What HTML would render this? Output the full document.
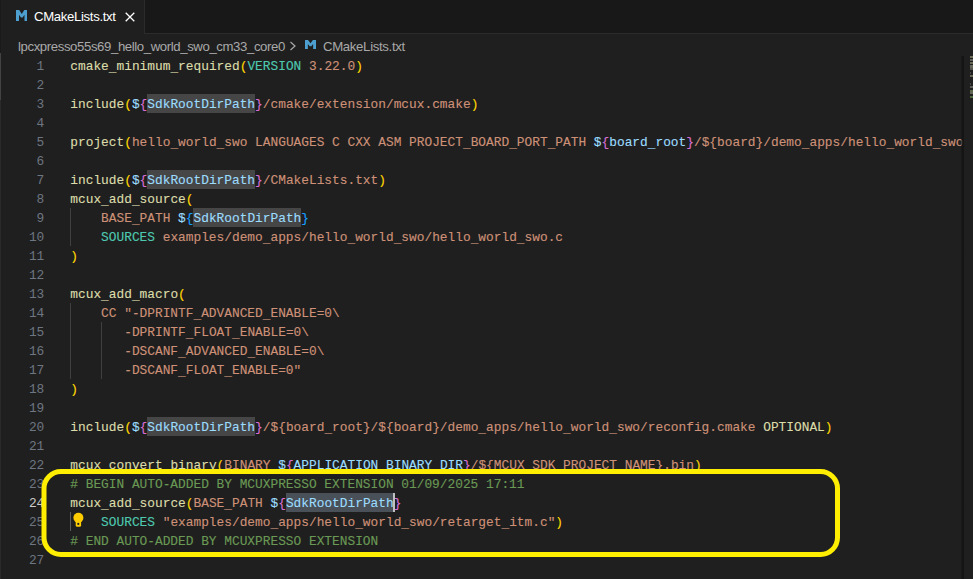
<!DOCTYPE html>
<html><head><meta charset="utf-8"><style>
html,body{margin:0;padding:0;}
body{width:973px;height:579px;overflow:hidden;background:#1f1f1f;position:relative;font-family:"Liberation Sans",sans-serif;}
.tabbar{position:absolute;left:0;top:0;width:973px;height:34px;background:#181818;}
.tabbar:after{content:"";position:absolute;left:145px;right:0;top:33px;height:1px;background:#2b2b2b;}
.tab{position:absolute;left:0;top:0;width:144px;height:34px;background:#1f1f1f;border-right:1px solid #2b2b2b;}
.tab .ic{position:absolute;left:15.7px;top:10px;}
.tab .tt{position:absolute;left:34px;top:9px;font-size:13.2px;letter-spacing:-0.35px;color:#ffffff;line-height:15px;white-space:nowrap;}
.tab .x{position:absolute;left:125px;top:12px;}
.crumb{position:absolute;top:39px;left:18px;font-size:13.2px;letter-spacing:-0.40px;color:#a9a9a9;line-height:15px;white-space:nowrap;}
.crumb2{position:absolute;top:39px;left:323px;font-size:13.2px;letter-spacing:-0.33px;color:#a9a9a9;line-height:15px;white-space:nowrap;}
.chev{position:absolute;left:289px;top:41px;}
.bic{position:absolute;left:304.8px;top:40.3px;}
.ln{position:absolute;left:0;width:44.3px;text-align:right;font-family:"Liberation Mono",monospace;font-size:12.83px;line-height:19px;height:19px;color:#6e7681;padding-top:1px;box-sizing:border-box;}
.ln.act{color:#cccccc;}
.cl{position:absolute;left:70.3px;font-family:"Liberation Mono",monospace;font-size:12.83px;line-height:19px;height:19px;white-space:pre;padding-top:1px;box-sizing:border-box;-webkit-text-stroke:0.12px;}
.hlb{position:absolute;height:19px;background:#464646;}
.hlb2{position:absolute;height:19px;background:#495057;}
.u{position:relative;top:1px;}
.guide{position:absolute;width:1px;background:#404040;}
.cursor{position:absolute;left:393px;top:493px;width:1.6px;height:19px;background:#c0c0c0;}
.shadow{position:absolute;left:961px;top:56px;width:3px;height:523px;background:linear-gradient(to right,rgba(18,18,18,0.3),#131313 60%,#151515 85%,#1c1c1c);}
.leftstrip1{position:absolute;left:0;top:0;width:1px;height:53px;background:#1a1a1a;}
.leftstrip2{position:absolute;left:0;top:53px;width:1px;height:47px;background:#434343;}
.leftstrip3{position:absolute;left:0;top:100px;width:1px;height:479px;background:#2a2a2a;}
.bulb{position:absolute;left:72px;top:511px;}
.box{position:absolute;left:0;top:0;}
</style></head><body>
<div class="tabbar"><div class="tab"><span class="ic"><svg width="11.5" height="11" viewBox="0 0 11.5 11" style="display:block"><path d="M0 11V0H3.2L5.75 4L8.3 0H11.5V11H8.5V4.8L6.6 7.6H4.9L3 4.8V11Z" fill="#4c9fcf"/></svg></span><span class="tt">CMakeLists.txt</span>
<svg class="x" width="10" height="10" viewBox="0 0 10 10"><path d="M0.7 0.7L9.3 9.3M9.3 0.7L0.7 9.3" stroke="#ffffff" stroke-width="1.3"/></svg></div></div>
<div class="leftstrip1"></div><div class="leftstrip2"></div><div class="leftstrip3"></div>
<div class="crumb">lpcxpresso55s69_hello_world_swo_cm33_core0</div>
<svg class="chev" width="8" height="10" viewBox="0 0 8 10"><path d="M1.5 1L6 5L1.5 9" fill="none" stroke="#a9a9a9" stroke-width="1.2"/></svg>
<svg class="bic" width="11" height="9" viewBox="0 0 11.5 11" preserveAspectRatio="none"><path d="M0 11V0H3.2L5.75 4L8.3 0H11.5V11H8.5V4.8L6.6 7.6H4.9L3 4.8V11Z" fill="#4c9fcf"/></svg>
<div class="crumb2">CMakeLists.txt</div>
<div class="hlb" style="left:147.27px;top:94px;width:107.76px"></div><div class="hlb" style="left:147.27px;top:170px;width:107.76px"></div><div class="hlb" style="left:193.45px;top:208px;width:107.76px"></div><div class="hlb" style="left:147.27px;top:417px;width:107.76px"></div><div class="hlb2" style="left:285.82px;top:493px;width:107.76px"></div>
<div class="guide" style="left:70.3px;top:208px;height:38px;background:#404040"></div><div class="guide" style="left:70.3px;top:303px;height:76px;background:#404040"></div><div class="guide" style="left:101.1px;top:322px;height:57px;background:#404040"></div><div class="guide" style="left:70.3px;top:512px;height:19px;background:#5c5c5c"></div>
<div class="ln" style="top:56px">1</div><div class="ln" style="top:75px">2</div><div class="ln" style="top:94px">3</div><div class="ln" style="top:113px">4</div><div class="ln" style="top:132px">5</div><div class="ln" style="top:151px">6</div><div class="ln" style="top:170px">7</div><div class="ln" style="top:189px">8</div><div class="ln" style="top:208px">9</div><div class="ln" style="top:227px">10</div><div class="ln" style="top:246px">11</div><div class="ln" style="top:265px">12</div><div class="ln" style="top:284px">13</div><div class="ln" style="top:303px">14</div><div class="ln" style="top:322px">15</div><div class="ln" style="top:341px">16</div><div class="ln" style="top:360px">17</div><div class="ln" style="top:379px">18</div><div class="ln" style="top:398px">19</div><div class="ln" style="top:417px">20</div><div class="ln" style="top:436px">21</div><div class="ln" style="top:455px">22</div><div class="ln" style="top:474px">23</div><div class="ln act" style="top:493px">24</div><div class="ln" style="top:512px">25</div><div class="ln" style="top:531px">26</div><div class="ln" style="top:550px">27</div>
<div class="cl" style="top:56px"><span style="color:#dcdcaa">cmake<span class="u">_</span>minimum<span class="u">_</span>required</span><span style="color:#ffd700">(</span><span style="color:#4ec9b0">VERSION</span><span style="color:#ce9178"> 3.22.0</span><span style="color:#ffd700">)</span></div><div class="cl" style="top:94px"><span style="color:#dcdcaa">include</span><span style="color:#ffd700">(</span><span style="color:#9cdcfe">$</span><span style="color:#da70d6">{</span><span style="color:#9cdcfe" class="hl">SdkRootDirPath</span><span style="color:#da70d6">}</span><span style="color:#ce9178">/cmake/extension/mcux.cmake</span><span style="color:#ffd700">)</span></div><div class="cl" style="top:132px"><span style="color:#dcdcaa">project</span><span style="color:#ffd700">(</span><span style="color:#ce9178">hello<span class="u">_</span>world<span class="u">_</span>swo LANGUAGES C CXX ASM PROJECT<span class="u">_</span>BOARD<span class="u">_</span>PORT<span class="u">_</span>PATH </span><span style="color:#9cdcfe">$</span><span style="color:#da70d6">{</span><span style="color:#9cdcfe">board<span class="u">_</span>root</span><span style="color:#da70d6">}</span><span style="color:#ce9178">/${board}/demo<span class="u">_</span>apps/hello<span class="u">_</span>world<span class="u">_</span>swo</span></div><div class="cl" style="top:170px"><span style="color:#dcdcaa">include</span><span style="color:#ffd700">(</span><span style="color:#9cdcfe">$</span><span style="color:#da70d6">{</span><span style="color:#9cdcfe" class="hl">SdkRootDirPath</span><span style="color:#da70d6">}</span><span style="color:#ce9178">/CMakeLists.txt</span><span style="color:#ffd700">)</span></div><div class="cl" style="top:189px"><span style="color:#dcdcaa">mcux<span class="u">_</span>add<span class="u">_</span>source</span><span style="color:#ffd700">(</span></div><div class="cl" style="top:208px"><span style="color:#ce9178">    BASE<span class="u">_</span>PATH </span><span style="color:#9cdcfe">$</span><span style="color:#179fff">{</span><span style="color:#9cdcfe" class="hl">SdkRootDirPath</span><span style="color:#179fff">}</span></div><div class="cl" style="top:227px"><span style="color:#ce9178">    </span><span style="color:#4ec9b0">SOURCES</span><span style="color:#ce9178"> examples/demo<span class="u">_</span>apps/hello<span class="u">_</span>world<span class="u">_</span>swo/hello<span class="u">_</span>world<span class="u">_</span>swo.c</span></div><div class="cl" style="top:246px"><span style="color:#ffd700">)</span></div><div class="cl" style="top:284px"><span style="color:#dcdcaa">mcux<span class="u">_</span>add<span class="u">_</span>macro</span><span style="color:#ffd700">(</span></div><div class="cl" style="top:303px"><span style="color:#ce9178">    CC "-DPRINTF<span class="u">_</span>ADVANCED<span class="u">_</span>ENABLE=0\</span></div><div class="cl" style="top:322px"><span style="color:#ce9178">       -DPRINTF<span class="u">_</span>FLOAT<span class="u">_</span>ENABLE=0\</span></div><div class="cl" style="top:341px"><span style="color:#ce9178">       -DSCANF<span class="u">_</span>ADVANCED<span class="u">_</span>ENABLE=0\</span></div><div class="cl" style="top:360px"><span style="color:#ce9178">       -DSCANF<span class="u">_</span>FLOAT<span class="u">_</span>ENABLE=0"</span></div><div class="cl" style="top:379px"><span style="color:#ffd700">)</span></div><div class="cl" style="top:417px"><span style="color:#dcdcaa">include</span><span style="color:#ffd700">(</span><span style="color:#9cdcfe">$</span><span style="color:#da70d6">{</span><span style="color:#9cdcfe" class="hl">SdkRootDirPath</span><span style="color:#da70d6">}</span><span style="color:#ce9178">/${board<span class="u">_</span>root}/${board}/demo<span class="u">_</span>apps/hello<span class="u">_</span>world<span class="u">_</span>swo/reconfig.cmake </span><span style="color:#dcdcaa">OPTIONAL</span><span style="color:#ffd700">)</span></div><div class="cl" style="top:455px"><span style="color:#dcdcaa">mcux<span class="u">_</span>convert<span class="u">_</span>binary</span><span style="color:#ffd700">(</span><span style="color:#ce9178">BINARY </span><span style="color:#9cdcfe">$</span><span style="color:#da70d6">{</span><span style="color:#9cdcfe">APPLICATION<span class="u">_</span>BINARY<span class="u">_</span>DIR</span><span style="color:#da70d6">}</span><span style="color:#ce9178">/${MCUX<span class="u">_</span>SDK<span class="u">_</span>PROJECT<span class="u">_</span>NAME}.bin</span><span style="color:#ffd700">)</span></div><div class="cl" style="top:474px"><span style="color:#6a9955"># BEGIN AUTO-ADDED BY MCUXPRESSO EXTENSION 01/09/2025 17:11</span></div><div class="cl" style="top:493px"><span style="color:#dcdcaa">mcux<span class="u">_</span>add<span class="u">_</span>source</span><span style="color:#ffd700">(</span><span style="color:#ce9178">BASE<span class="u">_</span>PATH </span><span style="color:#9cdcfe">$</span><span style="color:#da70d6">{</span><span style="color:#9cdcfe" class="hl2">SdkRootDirPath</span><span style="color:#da70d6">}</span></div><div class="cl" style="top:512px"><span style="color:#ce9178">    </span><span style="color:#4ec9b0">SOURCES</span><span style="color:#ce9178"> "examples/demo<span class="u">_</span>apps/hello<span class="u">_</span>world<span class="u">_</span>swo/retarget<span class="u">_</span>itm.c"</span><span style="color:#ffd700">)</span></div><div class="cl" style="top:531px"><span style="color:#6a9955"># END AUTO-ADDED BY MCUXPRESSO EXTENSION</span></div>
<div class="cursor"></div>
<svg class="bulb" width="14" height="17" viewBox="0 0 14 17"><circle cx="6.4" cy="6.8" r="5" fill="#ffcc00"/><rect x="3.7" y="9" width="5.4" height="6.8" rx="1.6" fill="#ffcc00"/><circle cx="6.3" cy="12.9" r="1.1" fill="#1f1f1f"/></svg>
<div class="shadow"></div>
<div style="position:absolute;left:970px;top:56px;width:3px;height:2px;background:#6f6e58"></div><div style="position:absolute;left:970px;top:59px;width:3px;height:2px;background:#5e5e58"></div><div style="position:absolute;left:970px;top:62px;width:3px;height:2px;background:#6a6957"></div><div style="position:absolute;left:970px;top:65px;width:3px;height:3px;background:#66665a"></div><div style="position:absolute;left:970px;top:68px;width:3px;height:2px;background:#55554d"></div><div style="position:absolute;left:970px;top:72px;width:1px;height:2px;background:#454545"></div><div style="position:absolute;left:970px;top:75px;width:3px;height:2px;background:#6a6957"></div><div style="position:absolute;left:970px;top:83px;width:1px;height:2px;background:#454545"></div><div style="position:absolute;left:970px;top:86px;width:3px;height:2px;background:#5e5e58"></div><div style="position:absolute;left:970px;top:90px;width:3px;height:2px;background:#5a6a4a"></div><div style="position:absolute;left:970px;top:92px;width:3px;height:2px;background:#66665a"></div><div style="position:absolute;left:970px;top:96px;width:3px;height:2px;background:#4f6a40"></div>
<svg class="box" width="973" height="579"><rect x="44" y="471.5" width="793.5" height="83" rx="17" ry="17" fill="none" stroke="#ffee00" stroke-width="5"/></svg>
</body></html>
